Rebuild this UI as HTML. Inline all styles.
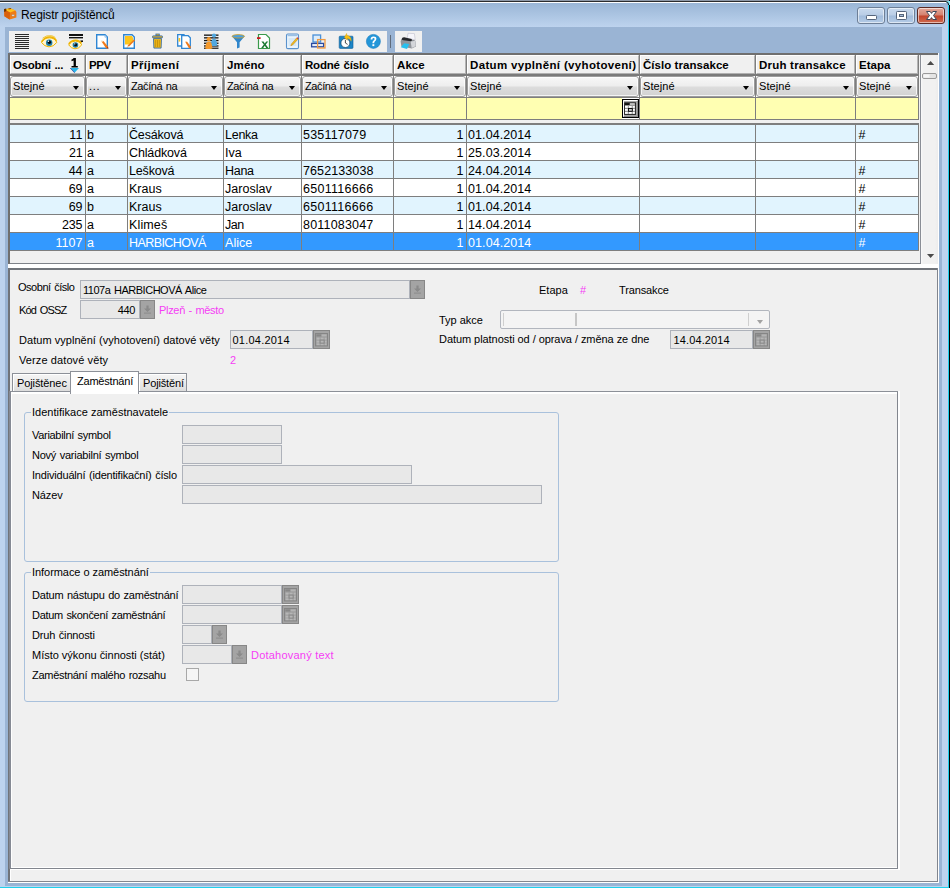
<!DOCTYPE html>
<html><head><meta charset="utf-8"><title>Registr pojištěnců</title>
<style>
*,*:before,*:after{box-sizing:border-box;margin:0;padding:0}
html,body{width:950px;height:888px;overflow:hidden}
body{position:relative;background:#20d0ec;font-family:"Liberation Sans",sans-serif;font-size:11px;color:#000}
.abs,.abs>*{position:absolute}
#win{position:absolute;left:0;top:0;width:948px;height:887px;background:linear-gradient(#9ab6d6 3px,#bdd3ee 27px,#bdd3ee 100%)}
#edgeR{position:absolute;left:949px;top:0;width:1px;height:888px;background:#000}
#top0{position:absolute;left:0;top:0;width:950px;height:1px;background:#8e99a8}
#top1{position:absolute;left:0;top:1px;width:948px;height:1px;background:#2c2c2c}
#top2{position:absolute;left:0;top:2px;width:948px;height:1px;background:#fdfeff}
#inner{position:absolute;left:5px;top:27px;width:937px;height:859px;background:#9ab4d4}
#title{position:absolute;left:21px;top:8px;font-size:12px;line-height:15px;white-space:nowrap}
/* caption buttons */
.cb{position:absolute;top:7px;height:17px;width:28px;border:1px solid #6d7f97;border-radius:3px;background:linear-gradient(#c9daee 0,#b9cde6 48%,#a2bcdc 52%,#b4cbe6 100%);box-shadow:inset 0 0 0 1px rgba(255,255,255,.55)}
.cb.x{background:linear-gradient(#e3a99b 0,#d4806e 48%,#c2432b 52%,#cf6a4f 100%);border-color:#5b2a25}
/* toolbar */
.tb{position:absolute;top:31px;height:21px;background:#f0f0f0}
/* grid */
#grid{position:absolute;left:8px;top:53px;width:931px;height:212px;background:#f0f0f0}
#grid:before{content:"";position:absolute;left:0;top:0;width:930px;height:211px;border:2px solid #6f6f6f;border-right:0;border-bottom:0}
#grid:after{content:"";position:absolute;left:2px;top:2px;width:911px;height:209px;border-right:1px solid #8a8e96;border-bottom:1px solid #7e8288}
#gbr{position:absolute;left:938px;top:53px;width:1px;height:212px;background:#fff}
#gbb{position:absolute;left:8px;top:264px;width:931px;height:1px;background:#fff}
.hc{position:absolute;top:55px;height:19px;background:#f0f0f0;border-top:1px solid #fff;border-left:1px solid #fff;border-right:1px solid #b4b4b4;border-bottom:1px solid #b0b0b0;font-weight:bold;font-size:11.5px;line-height:14px;white-space:nowrap;overflow:hidden}
.hc span{position:absolute;left:2px;top:2px}
.fc{position:absolute;top:76px;height:21px;background:#fff;font-size:11px;line-height:13px;white-space:nowrap;overflow:hidden}
.fc:before{content:"";position:absolute;left:0;top:0;right:0;bottom:0;border:1px solid #9c9c9c;border-radius:3px;background:linear-gradient(#f7f7f7 0,#eeeeee 45%,#dcdcdc 55%,#d2d2d2 100%);box-shadow:inset 0 0 0 1px rgba(255,255,255,.75)}
.fc span{position:absolute;left:3px;top:4px}
.fc i{position:absolute;right:6px;top:10px;width:0;height:0;border-left:3.5px solid transparent;border-right:3.5px solid transparent;border-top:4px solid #000}
.yc{position:absolute;top:98px;height:21px;background:#ffffb2}
.vl{position:absolute;width:1px;background:#7e7e7e}
.hl{position:absolute;height:1px;background:#7e7e7e}
.row{position:absolute;left:10px;width:909px;height:18px;border-bottom:1px solid #7e7e7e}
.row.odd{background:#e1f4fe}
.row.even{background:#fff}
.row.sel{background:#3399ff;color:#fff}
.c{position:absolute;top:0;height:17px;font-size:12.5px;line-height:17px;white-space:nowrap;overflow:hidden}
.c span{position:absolute;left:1px;top:2px}
.c.r span{left:auto;right:2.5px}
/* form */
.lbl{position:absolute;font-size:11px;line-height:13px;white-space:nowrap}
.mg{color:#f53df5}
.fld{position:absolute;height:19px;background:#e8e8e8;border:1px solid #aeb2ba;font-size:11px;line-height:17px;white-space:nowrap;overflow:hidden}
.btn{position:absolute;width:15px;height:19px;background:#a4a4a4;border:1px solid #878787}
.btn.cal{width:17px}
.btn svg{position:absolute;left:0;top:0}
.grp{position:absolute;border:1px solid #a9c1dc;border-radius:3px}
.grp b{position:absolute;top:-7px;left:6px;background:#f0f0f0;font-weight:normal;font-size:11px;line-height:13px;padding:0 1px;white-space:nowrap}
.tab{position:absolute;background:linear-gradient(#f5f5f5 0,#ececec 45%,#dcdcdc 100%);border:1px solid #8c9098;border-bottom:0;box-shadow:inset 1px 1px 0 #fff;font-size:11px;line-height:13px;white-space:nowrap}
.tab span{position:absolute;left:4px;top:3px}
.tab.on{background:#fff;box-shadow:none}
.tab.on span{left:6px;top:3px}
</style></head><body>
<div id="win"></div>
<div id="top0"></div><div id="top1"></div><div id="top2"></div><div id="edgeR"></div>
<svg style="position:absolute;left:944px;top:0" width="6" height="6" viewBox="944 0 6 6"><path d="M946 1 H950 V5 H948.6 Q948.6 2.4 946 2.4Z" fill="#7fe8f8"/><path d="M945.6 1.5 Q948.6 1.6 948.6 5" fill="none" stroke="#111" stroke-width="1"/></svg>
<div id="inner"></div>
<div id="title"><span style="letter-spacing:-0.099px">Registr pojištěnců</span></div>
<svg style="position:absolute;left:3px;top:7px" width="15" height="14" viewBox="3 7 15 14">
<path d="M4.2 9.6 L10 8.2 L15.4 10.6 L16.4 12 V17.6 L9.6 19.6 L4.4 16.2Z" fill="#ef7c14"/>
<path d="M4.2 9.6 L10 8.2 L15.4 10.6 L10 12.4Z" fill="#ffc21c"/>
<path d="M4.2 9.6 L10 12.4 L9.6 19.6 L4.4 16.2Z" fill="#d8600c"/>
<path d="M4 9 L6.2 8.6 L6.4 11 L4.2 12Z" fill="#6a3200"/>
<path d="M8.4 8.4 L11 8 L11.2 9 L8.6 9.4Z" fill="#8a4a00"/>
<rect x="11.6" y="14.6" width="3" height="1.6" rx=".6" fill="#f4efe8" stroke="#8a5a30" stroke-width=".4"/>
</svg>

<div class="cb" style="left:857px"></div><div class="cb" style="left:887px"></div><div class="cb x" style="left:917px"></div>
<svg style="position:absolute;left:857px;top:7px" width="88" height="17" viewBox="857 7 88 17">
<rect x="866.5" y="15.5" width="10" height="4" rx=".8" fill="#fff" stroke="#55657c" stroke-width="1"/>
<rect x="896.5" y="11.5" width="10" height="8" rx=".8" fill="#fff" stroke="#55657c" stroke-width="1"/>
<rect x="899.5" y="14.5" width="4" height="2" fill="#a8bed8" stroke="#55657c" stroke-width="1"/>
<path d="M926.5 11.5 H930.2 L931.5 13.4 L932.8 11.5 H936.5 L933.5 15.5 L936.5 19.5 H932.8 L931.5 17.6 L930.2 19.5 H926.5 L929.5 15.5Z" fill="#fff" stroke="#3c4658" stroke-width="1" stroke-linejoin="round"/>
</svg>

<div class="tb" style="left:9px;width:378px"></div>
<div class="tb" style="left:395px;width:27px"></div>
<div style="position:absolute;left:390px;top:35px;width:1px;height:13px;background:#5f6b7b"></div>
<svg style="position:absolute;left:9px;top:31px" width="414" height="21" viewBox="9 31 414 21">
<!-- 1 lines -->
<g fill="#2a2a2a"><rect x="15" y="34" width="14" height="1"/><rect x="15" y="36" width="14" height="1"/><rect x="15" y="38" width="14" height="1"/><rect x="15" y="40" width="14" height="1"/><rect x="15" y="42" width="14" height="1"/><rect x="15" y="44" width="14" height="1"/><rect x="15" y="46" width="14" height="1"/><rect x="15" y="48" width="14" height="1"/></g>
<!-- 2 eye -->
<g>
<path d="M41.5 42.5 Q44 37.8 49.5 37.8 Q55 38 56.8 42.4 Q53.5 46.9 49 46.9 Q44.5 46.6 41.5 42.5Z" fill="#fff4d0" stroke="#eeb400" stroke-width="1"/>
<path d="M41.6 41.8 Q45 36.8 50 37 Q54.6 37.2 56.4 40.8" stroke="#f0b400" stroke-width="1.7" fill="none"/>
<path d="M42.6 38.2 Q46.5 34.9 51.5 35.7 Q54 36.3 55.4 37.7" stroke="#f0c020" stroke-width=".9" fill="none"/>
<circle cx="49.2" cy="42.7" r="3.2" fill="#1e7ea8"/><circle cx="49.4" cy="42.3" r="1.7" fill="#05080c"/><circle cx="48.5" cy="41.3" r=".7" fill="#fff"/>
</g>
<!-- 3 eye + lines -->
<rect x="69" y="34" width="14" height="2" fill="#111"/><rect x="69" y="37" width="14" height="1.4" fill="#111"/><rect x="80.4" y="40.4" width="2.6" height="1.6" fill="#111"/>
<g>
<path d="M68.6 44.8 Q71 41 75.5 41 Q80 41.2 81.8 44.8 Q79 48.8 75 48.8 Q71.2 48.6 68.6 44.8Z" fill="#fff4d0" stroke="#eeb400" stroke-width="1"/>
<path d="M68.8 44 Q71.5 40 75.8 40.2 Q79.6 40.4 81.4 43.4" stroke="#f0b400" stroke-width="1.6" fill="none"/>
<circle cx="75.4" cy="45" r="2.8" fill="#1e7ea8"/><circle cx="75.6" cy="44.7" r="1.5" fill="#05080c"/><circle cx="74.8" cy="43.9" r=".6" fill="#fff"/>
</g>
<!-- 4 new doc -->
<path d="M96.7 34.7 H105 L107.3 37 V48.3 H96.7Z" fill="#fff" stroke="#2f86d4" stroke-width="1.4"/>
<path d="M104.9 35 V37.2 H107" fill="#cfe4f8" stroke="#7ab4e8" stroke-width=".6"/>
<path d="M101.7 41.7 L103.4 41 L108 46.6 L107.9 48.7 L106 48.3Z" fill="#f07a1c"/><path d="M101.1 40.5 L103.4 41 L101.7 42.3Z" fill="#f6d4a8"/><path d="M106.7 47.5 L108 46.6 L108.5 49Z" fill="#a83410"/>
<!-- 5 edit doc -->
<path d="M123.7 34.7 H132 L134.3 37 V48.3 H123.7Z" fill="#fff" stroke="#2f86d4" stroke-width="1.4"/>
<path d="M125 36 H131.8 L133 37.4 V41.5 L130 44.4 H125Z" fill="#fcc41c"/>
<path d="M133.9 39.4 L135 40.6 L128.8 46.8 L127.6 45.6Z" fill="#f07a1c"/><path d="M127.6 45.6 L128.8 46.8 L126.6 47.8Z" fill="#f6d4a8"/><path d="M126.6 47.8 L127.2 46.9 L127.6 47.4Z" fill="#603010"/>
<!-- 6 trash -->
<rect x="155.9" y="34" width="3.4" height="1.8" fill="#e8b020" stroke="#3a6ea8" stroke-width=".8"/>
<rect x="152.5" y="35.9" width="10" height="2" rx=".6" fill="#e8b020" stroke="#3a6ea8" stroke-width=".9"/>
<path d="M153.5 38.6 H161.5 L161.1 48.1 H153.9Z" fill="#f2ba18" stroke="#3a6ea8" stroke-width=".9"/>
<path d="M155.7 40 V47 M157.5 40 V47 M159.3 40 V47" stroke="#c4900c" stroke-width=".9" fill="none"/>
<!-- 7 copy doc -->
<path d="M177.7 34.7 H184 V46 H177.7Z" fill="#fff" stroke="#2f86d4" stroke-width="1.3"/>
<rect x="178.6" y="38" width="1.6" height="3.6" fill="#fcc41c"/>
<path d="M181.7 35.7 H188.2 L190.3 37.8 V48.3 H181.7Z" fill="#fff" stroke="#2f86d4" stroke-width="1.3"/>
<path d="M185.4 42.2 L186.9 41.6 L190.8 46.4 L190.8 48.6 L189 48.2Z" fill="#f07a1c"/><path d="M184.9 41.2 L186.9 41.6 L185.4 42.7Z" fill="#f6d4a8"/>
<!-- 8 people -->
<g fill="#111"><rect x="204" y="34.5" width="14.5" height="1.3"/><rect x="204" y="37.2" width="14.5" height="1.3"/><rect x="204" y="39.9" width="14.5" height="1.3"/><rect x="204" y="42.6" width="14.5" height="1.3"/><rect x="204" y="45.3" width="14.5" height="1.3"/><rect x="204" y="47.6" width="14.5" height="1.2"/></g>
<circle cx="214" cy="35.6" r="2.1" fill="#52a8e0"/><path d="M211 45.6 Q211 38.6 214 38.4 Q217 38.6 217.2 45.6 Q214 46.6 211 45.6Z" fill="#52a8e0"/>
<circle cx="208.8" cy="39.2" r="2.1" fill="#f59a2c"/><path d="M205.2 48.4 Q205.6 41.8 208.8 41.6 Q212 41.8 212.4 48.4 Q208.8 49.4 205.2 48.4Z" fill="#f59a2c"/>
<!-- 9 funnel -->
<path d="M232 36.2 Q238.2 33.2 244.6 36.2 L239.6 42.2 V47.6 L237 48.6 V42.2Z" fill="#2f86cc"/>
<ellipse cx="238.3" cy="36.3" rx="6.2" ry="1.7" fill="#4aa0e0" stroke="#d8a020" stroke-width=".8"/>
<!-- 10 excel -->
<path d="M258.5 34.5 H266 L269.5 38 V48.5 H258.5Z" fill="#fff" stroke="#3a9a4a" stroke-width="1.2"/>
<rect x="257" y="37.2" width="3.6" height="1.8" fill="#c8181c"/>
<path d="M261.4 41.4 H263.6 L264.8 43.4 L266.2 41.4 H268.2 L265.8 44.6 L268.4 48 H266.2 L264.8 45.8 L263.2 48 H261.2 L263.8 44.6Z" fill="#1e7a34"/>
<!-- 11 notepad -->
<rect x="286.5" y="34" width="12" height="14.6" rx="1.4" fill="#eaf4fc" stroke="#5a92cc" stroke-width="1.1"/>
<rect x="287.6" y="34.4" width="9.8" height="1.8" fill="#9cc0e4"/>
<path d="M288.5 39 H296.5 M288.5 41 H296.5 M288.5 43 H296.5 M288.5 45 H296.5" stroke="#b8d8f0" stroke-width=".8"/>
<path d="M296.6 38 L298 39.2 L292.6 45 L290.8 45.8 L291.4 44Z" fill="#f0c020" stroke="#c07a10" stroke-width=".5"/><path d="M296.6 38 L297.4 37.2 L298.8 38.4 L298 39.2Z" fill="#d03030"/>
<!-- 12 windows -->
<rect x="313" y="35" width="7.6" height="7" fill="#dcecfa" stroke="#4a90d8" stroke-width="1.3"/>
<rect x="311.6" y="43.4" width="12" height="3.4" fill="#e8eef8" stroke="#2a4aa0" stroke-width="1.3"/>
<rect x="317.6" y="39.6" width="7.4" height="8.4" fill="none" stroke="#f09a40" stroke-width="1.3"/>
<!-- 13 clock -->
<rect x="339.2" y="36.2" width="13.8" height="12.2" rx=".8" fill="#1c86c8" stroke="#0e5a94" stroke-width=".6"/>
<circle cx="345.4" cy="43" r="4.5" fill="#fff" stroke="#0a3a60" stroke-width=".7"/>
<path d="M345.4 43 V39.8 M345.4 43 L347.6 44.4" stroke="#222" stroke-width=".8" fill="none"/>
<path d="M344.4 37.4 L346.6 33.4 L347 35.4 Q351.6 36 351.2 41.2 Q350.2 38.2 347.2 38.4 L347.4 40.2Z" fill="#f8c010" stroke="#d89a08" stroke-width=".4"/>
<!-- 14 help -->
<circle cx="373.4" cy="41.4" r="7" fill="#2496d8"/><circle cx="373.4" cy="41.4" r="7" fill="none" stroke="#1a7cc0" stroke-width=".6"/>
<path d="M370.6 39.4 Q370.6 36.4 373.5 36.4 Q376.4 36.4 376.4 38.8 Q376.4 40.4 374.8 41.4 Q374.2 41.9 374.2 43.2 H372.4 Q372.4 41.2 373.6 40.4 Q374.6 39.7 374.6 38.9 Q374.6 38 373.5 38 Q372.4 38 372.4 39.4Z" fill="#fff"/><rect x="372.4" y="44.2" width="1.9" height="1.9" fill="#fff"/>
<!-- 15 printer -->
<path d="M400.6 41.4 Q400.6 38.6 403 38.2 L412 39.4 Q416 40 416 42.4 V46.4 L411.8 48.4 L401.4 46.6Z" fill="#90949a"/>
<path d="M410.6 41.6 L415.7 40.7 V46.3 L411.7 48Z" fill="#d4d6da"/>
<path d="M407.2 38.2 L408 33.3 L414.4 33.6 L415.2 39.8 L411.6 39.2Z" fill="#f6f6fb" stroke="#b4b4c4" stroke-width=".5"/>
<path d="M401.8 38.7 Q402.4 37.1 405.2 37.4 L411.6 39 Q412.7 40.2 411 41.3 L403.4 40.3 Q401.4 39.9 401.8 38.7Z" fill="#25272b"/>
<path d="M404.2 43.3 L409.3 44.1 L407 48.9 L400.8 47.3Z" fill="#28c0ee"/>
</svg>

<div id="grid"></div><div id="gbr"></div><div id="gbb"></div>
<div class="hc" style="left:10px;width:75px"><span style="letter-spacing:-0.321px;word-spacing:0.821px">Osobní ...</span></div>
<div class="fc" style="left:10px;width:75px"><span style="letter-spacing:0.099px">Stejné</span><i></i></div>
<div class="yc" style="left:10px;width:75px"></div>
<div class="hc" style="left:86px;width:41px"><span style="letter-spacing:-0.405px">PPV</span></div>
<div class="fc" style="left:86px;width:41px"><span style="letter-spacing:0.709px">...</span><i></i></div>
<div class="yc" style="left:86px;width:41px"></div>
<div class="hc" style="left:128px;width:95px"><span style="letter-spacing:0.351px">Příjmení</span></div>
<div class="fc" style="left:128px;width:95px"><span style="letter-spacing:-0.390px;word-spacing:0.890px">Začíná na</span><i></i></div>
<div class="yc" style="left:128px;width:95px"></div>
<div class="hc" style="left:224px;width:77px"><span style="letter-spacing:0.144px">Jméno</span></div>
<div class="fc" style="left:224px;width:77px"><span style="letter-spacing:-0.390px;word-spacing:0.890px">Začíná na</span><i></i></div>
<div class="yc" style="left:224px;width:77px"></div>
<div class="hc" style="left:302px;width:91px"><span style="letter-spacing:-0.189px;word-spacing:0.689px">Rodné číslo</span></div>
<div class="fc" style="left:302px;width:91px"><span style="letter-spacing:-0.390px;word-spacing:0.890px">Začíná na</span><i></i></div>
<div class="yc" style="left:302px;width:91px"></div>
<div class="hc" style="left:394px;width:72px"><span style="letter-spacing:0.075px">Akce</span></div>
<div class="fc" style="left:394px;width:72px"><span style="letter-spacing:0.099px">Stejné</span><i></i></div>
<div class="yc" style="left:394px;width:72px"></div>
<div class="hc" style="left:467px;width:172px"><span style="letter-spacing:0.338px">Datum vyplnění (vyhotovení)</span></div>
<div class="fc" style="left:467px;width:172px"><span style="letter-spacing:0.099px">Stejné</span><i></i></div>
<div class="yc" style="left:467px;width:172px"></div>
<div class="hc" style="left:640px;width:115px"><span style="letter-spacing:0.052px">Číslo transakce</span></div>
<div class="fc" style="left:640px;width:115px"><span style="letter-spacing:0.099px">Stejné</span><i></i></div>
<div class="yc" style="left:640px;width:115px"></div>
<div class="hc" style="left:756px;width:99px"><span style="letter-spacing:0.219px">Druh transakce</span></div>
<div class="fc" style="left:756px;width:99px"><span style="letter-spacing:0.099px">Stejné</span><i></i></div>
<div class="yc" style="left:756px;width:99px"></div>
<div class="hc" style="left:856px;width:62px"><span style="letter-spacing:0.034px">Etapa</span></div>
<div class="fc" style="left:856px;width:62px"><span style="letter-spacing:0.099px">Stejné</span><i></i></div>
<div class="yc" style="left:856px;width:62px"></div>
<div class="hl" style="left:10px;top:74px;width:909px;height:2px;background:#7a7a7a"></div>
<div class="hl" style="left:10px;top:97px;width:909px"></div>
<div class="hl" style="left:10px;top:119px;width:909px"></div>
<div class="hl" style="left:10px;top:123px;width:909px;height:2px"></div>
<div class="row odd" style="top:125px">
<div class="c r" style="left:0px;width:75px"><span style="letter-spacing:0.108px">11</span></div>
<div class="c" style="left:76px;width:41px"><span>b</span></div>
<div class="c" style="left:118px;width:95px"><span style="letter-spacing:-0.162px">Česáková</span></div>
<div class="c" style="left:214px;width:77px"><span style="letter-spacing:-0.253px">Lenka</span></div>
<div class="c" style="left:292px;width:91px"><span style="letter-spacing:0.195px">535117079</span></div>
<div class="c r" style="left:384px;width:72px"><span>1</span></div>
<div class="c" style="left:457px;width:172px"><span style="letter-spacing:0.084px">01.04.2014</span></div>
<div class="c" style="left:846px;width:62px"><span style="left:2.5px;letter-spacing:0.5px">#</span></div>
</div>
<div class="row even" style="top:143px">
<div class="c r" style="left:0px;width:75px"><span style="letter-spacing:-0.153px">21</span></div>
<div class="c" style="left:76px;width:41px"><span>a</span></div>
<div class="c" style="left:118px;width:95px"><span style="letter-spacing:-0.142px">Chládková</span></div>
<div class="c" style="left:214px;width:77px"><span style="letter-spacing:0.038px">Iva</span></div>
<div class="c r" style="left:384px;width:72px"><span>1</span></div>
<div class="c" style="left:457px;width:172px"><span style="letter-spacing:0.084px">25.03.2014</span></div>
</div>
<div class="row odd" style="top:161px">
<div class="c r" style="left:0px;width:75px"><span style="letter-spacing:-0.053px">44</span></div>
<div class="c" style="left:76px;width:41px"><span>a</span></div>
<div class="c" style="left:118px;width:95px"><span style="letter-spacing:-0.166px">Lešková</span></div>
<div class="c" style="left:214px;width:77px"><span style="letter-spacing:-0.273px">Hana</span></div>
<div class="c" style="left:292px;width:91px"><span style="letter-spacing:0.097px">7652133038</span></div>
<div class="c r" style="left:384px;width:72px"><span>1</span></div>
<div class="c" style="left:457px;width:172px"><span style="letter-spacing:0.084px">24.04.2014</span></div>
<div class="c" style="left:846px;width:62px"><span style="left:2.5px;letter-spacing:0.5px">#</span></div>
</div>
<div class="row even" style="top:179px">
<div class="c r" style="left:0px;width:75px"><span style="letter-spacing:-0.053px">69</span></div>
<div class="c" style="left:76px;width:41px"><span>a</span></div>
<div class="c" style="left:118px;width:95px"><span style="letter-spacing:0.029px">Kraus</span></div>
<div class="c" style="left:214px;width:77px"><span style="letter-spacing:0.032px">Jaroslav</span></div>
<div class="c" style="left:292px;width:91px"><span style="letter-spacing:0.283px">6501116666</span></div>
<div class="c r" style="left:384px;width:72px"><span>1</span></div>
<div class="c" style="left:457px;width:172px"><span style="letter-spacing:0.084px">01.04.2014</span></div>
<div class="c" style="left:846px;width:62px"><span style="left:2.5px;letter-spacing:0.5px">#</span></div>
</div>
<div class="row odd" style="top:197px">
<div class="c r" style="left:0px;width:75px"><span style="letter-spacing:-0.053px">69</span></div>
<div class="c" style="left:76px;width:41px"><span>b</span></div>
<div class="c" style="left:118px;width:95px"><span style="letter-spacing:0.029px">Kraus</span></div>
<div class="c" style="left:214px;width:77px"><span style="letter-spacing:0.032px">Jaroslav</span></div>
<div class="c" style="left:292px;width:91px"><span style="letter-spacing:0.283px">6501116666</span></div>
<div class="c r" style="left:384px;width:72px"><span>1</span></div>
<div class="c" style="left:457px;width:172px"><span style="letter-spacing:0.084px">01.04.2014</span></div>
<div class="c" style="left:846px;width:62px"><span style="left:2.5px;letter-spacing:0.5px">#</span></div>
</div>
<div class="row even" style="top:215px">
<div class="c r" style="left:0px;width:75px"><span style="letter-spacing:-0.086px">235</span></div>
<div class="c" style="left:76px;width:41px"><span>a</span></div>
<div class="c" style="left:118px;width:95px"><span style="letter-spacing:0.131px">Klimeš</span></div>
<div class="c" style="left:214px;width:77px"><span style="letter-spacing:-0.452px">Jan</span></div>
<div class="c" style="left:292px;width:91px"><span style="letter-spacing:0.191px">8011083047</span></div>
<div class="c r" style="left:384px;width:72px"><span>1</span></div>
<div class="c" style="left:457px;width:172px"><span style="letter-spacing:0.084px">14.04.2014</span></div>
<div class="c" style="left:846px;width:62px"><span style="left:2.5px;letter-spacing:0.5px">#</span></div>
</div>
<div class="row sel" style="top:233px">
<div class="c r" style="left:0px;width:75px"><span style="letter-spacing:0.052px">1107</span></div>
<div class="c" style="left:76px;width:41px"><span>a</span></div>
<div class="c" style="left:118px;width:95px"><span style="letter-spacing:-0.586px">HARBICHOVÁ</span></div>
<div class="c" style="left:214px;width:77px"><span style="letter-spacing:0.041px">Alice</span></div>
<div class="c r" style="left:384px;width:72px"><span>1</span></div>
<div class="c" style="left:457px;width:172px"><span style="letter-spacing:0.084px">01.04.2014</span></div>
<div class="c" style="left:846px;width:62px"><span style="left:2.5px;letter-spacing:0.5px">#</span></div>
</div>
<div class="vl" style="left:85px;top:55px;height:65px"></div>
<div class="vl" style="left:85px;top:123px;height:128px"></div>
<div class="vl" style="left:127px;top:55px;height:65px"></div>
<div class="vl" style="left:127px;top:123px;height:128px"></div>
<div class="vl" style="left:223px;top:55px;height:65px"></div>
<div class="vl" style="left:223px;top:123px;height:128px"></div>
<div class="vl" style="left:301px;top:55px;height:65px"></div>
<div class="vl" style="left:301px;top:123px;height:128px"></div>
<div class="vl" style="left:393px;top:55px;height:65px"></div>
<div class="vl" style="left:393px;top:123px;height:128px"></div>
<div class="vl" style="left:466px;top:55px;height:65px"></div>
<div class="vl" style="left:466px;top:123px;height:128px"></div>
<div class="vl" style="left:639px;top:55px;height:65px"></div>
<div class="vl" style="left:639px;top:123px;height:128px"></div>
<div class="vl" style="left:755px;top:55px;height:65px"></div>
<div class="vl" style="left:755px;top:123px;height:128px"></div>
<div class="vl" style="left:855px;top:55px;height:65px"></div>
<div class="vl" style="left:855px;top:123px;height:128px"></div>
<div class="vl" style="left:918px;top:55px;height:65px"></div>
<div class="vl" style="left:918px;top:123px;height:128px"></div>
<svg style="position:absolute;left:69px;top:57px" width="12" height="17" viewBox="69 57 12 17">
<path d="M73.6 58 H75.9 V66 H77.8 V67.6 H71.5 V66 H73.6 V60.6 L71.5 61.3 V59.6 Q73 59.2 73.6 58Z" fill="#000"/>
<path d="M70.2 68 H79 L74.6 72.8Z" fill="#28b4ea"/><path d="M70.2 68 L74.6 72.8" stroke="#2a3a98" stroke-width=".7" fill="none"/>
</svg>
<svg style="position:absolute;left:622px;top:98px" width="17" height="21" viewBox="0 0 17 21">
<rect x="0" y="0" width="17" height="21" fill="#fff"/>
<rect x="0.5" y="1.5" width="16" height="18" fill="#a9a9a9" stroke="#000" stroke-width="1"/>
<path d="M1.5 18.5 V2.5 H15.5" fill="none" stroke="#fff" stroke-width="1"/>
<path d="M2 18.5 H15.5 V3" fill="none" stroke="#8a8a8a" stroke-width="1"/>
<rect x="2.6" y="4.8" width="11" height="11.6" fill="#9a9a9a" stroke="#1a1a1a" stroke-width=".9"/>
<rect x="3" y="5.2" width="4.6" height="1.7" fill="#000"/><rect x="8" y="5.2" width="4.6" height="1.7" fill="#c4c4c4"/>
<g fill="#fff"><rect x="3" y="8" width="2.8" height="1.8"/><rect x="6.9" y="8" width="2.8" height="1.8"/><rect x="10.8" y="8" width="2" height="1.8"/>
<rect x="3" y="11" width="2.8" height="1.8"/><rect x="10.8" y="11" width="2" height="1.8"/>
<rect x="3" y="14" width="2.8" height="1.8"/><rect x="6.9" y="14" width="2.8" height="1.8"/><rect x="10.8" y="14" width="2" height="1.8"/></g>
<rect x="6.5" y="10.5" width="3.8" height="2.8" fill="#c8c8c8" stroke="#000" stroke-width=".9"/>
</svg>
<!-- scrollbar -->
<div style="position:absolute;left:921px;top:55px;width:17px;height:209px;background:linear-gradient(90deg,#fafafa 0,#f1f1f1 2px,#f1f1f1 14px,#ececec 17px)"></div>
<svg style="position:absolute;left:921px;top:55px" width="16" height="208" viewBox="921 55 16 208">
<path d="M927 65 L930.6 61 L934.2 65Z" fill="#4a4a4a"/>
<rect x="922.5" y="73.5" width="14" height="5" rx="1.5" fill="#e4e4e4" stroke="#9a9a9a" stroke-width="1"/>
<rect x="923.5" y="74.5" width="6" height="3" fill="#f6f6f6"/>
<path d="M927 254 L930.6 258 L934.2 254Z" fill="#4a4a4a"/>
</svg>

<div style="position:absolute;left:8px;top:264px;width:931px;height:4px;background:#fff"></div>
<div id="panel" style="position:absolute;left:8px;top:268px;width:931px;height:615px;background:#f0f0f0;border:2px solid #70747a;border-right:0;border-bottom:0"></div>
<div style="position:absolute;left:937px;top:268px;width:1px;height:614px;background:#82868e"></div>
<div style="position:absolute;left:938px;top:268px;width:1px;height:615px;background:#fff"></div>
<div style="position:absolute;left:8px;top:881px;width:930px;height:1px;background:#82868e"></div>
<div style="position:absolute;left:8px;top:882px;width:931px;height:1px;background:#fff"></div>

<div class="lbl" id="l1" style="letter-spacing:-0.476px;word-spacing:0.976px;left:18px;top:281px">Osobní číslo</div>
<div class="fld" style="left:80px;top:280px;width:330px"><span style="letter-spacing:-0.478px;word-spacing:0.978px;position:absolute;left:2px;top:1px">1107a HARBICHOVÁ Alice</span></div>
<div class="btn" style="left:410px;top:280px"><svg width="13" height="17" viewBox="0 0 13 17"><path d="M5.4 4.4 H7.6 V7.4 H10 L6.5 10.9 L3 7.4 H5.4Z" fill="#8a8a8a"/><rect x="3" y="11.6" width="7" height="1" fill="#8c8c8c"/></svg></div>
<div class="lbl" id="l2" style="letter-spacing:-0.825px;word-spacing:1.325px;left:19px;top:304px">Kód OSSZ</div>
<div class="fld" style="left:80px;top:300px;width:60px"><span style="letter-spacing:-0.353px;position:absolute;right:4px;top:1px">440</span></div>
<div class="btn" style="left:140px;top:300px"><svg width="13" height="17" viewBox="0 0 13 17"><path d="M5.4 4.4 H7.6 V7.4 H10 L6.5 10.9 L3 7.4 H5.4Z" fill="#8a8a8a"/><rect x="3" y="11.6" width="7" height="1" fill="#8c8c8c"/></svg></div>
<div class="lbl mg" style="letter-spacing:-0.314px;word-spacing:0.814px;left:159px;top:304px">Plzeň - město</div>
<div class="lbl" style="letter-spacing:0.038px;left:19px;top:334px">Datum vyplnění (vyhotovení) datové věty</div>
<div class="fld" style="left:230px;top:330px;width:83px"><span style="letter-spacing:0.224px;position:absolute;left:1.5px;top:1px">01.04.2014</span></div>
<div class="btn cal" style="left:313px;top:330px"><svg width="15" height="17" viewBox="0 0 15 17"><rect x="1.5" y="2.5" width="12" height="12.4" fill="#9c9c9c" stroke="#858585" stroke-width="1"/><rect x="2.4" y="3.4" width="5" height="2" fill="#878787"/><rect x="7.6" y="3.4" width="5" height="2" fill="#b4b4b4"/><g fill="#b6b6b6"><rect x="2.6" y="6.6" width="3" height="2"/><rect x="6.6" y="6.6" width="3" height="2"/><rect x="10.6" y="6.6" width="2" height="2"/><rect x="2.6" y="9.6" width="3" height="2"/><rect x="6.6" y="9.6" width="3" height="2"/><rect x="10.6" y="9.6" width="2" height="2"/><rect x="2.6" y="12.4" width="3" height="1.8"/><rect x="6.6" y="12.4" width="3" height="1.8"/><rect x="10.6" y="12.4" width="2" height="1.8"/></g><rect x="6" y="9" width="4.2" height="3.2" fill="none" stroke="#858585" stroke-width=".8"/></svg></div>
<div class="lbl" style="letter-spacing:0.103px;left:19px;top:354px">Verze datové věty</div>
<div class="lbl mg" style="letter-spacing:0.275px;left:230px;top:354px">2</div>

<div class="lbl" style="letter-spacing:0.010px;left:539px;top:284px">Etapa</div>
<div class="lbl mg" style="letter-spacing:2.175px;left:580px;top:284px">#</div>
<div class="lbl" style="letter-spacing:-0.128px;left:619px;top:284px">Transakce</div>
<div class="lbl" style="letter-spacing:-0.029px;left:439px;top:314px">Typ akce</div>
<div class="fld" style="left:500px;top:310px;width:270px;border-color:#b2b6be;background:#f4f4f4;border-radius:2px"></div>
<div style="position:absolute;left:503px;top:313px;width:1px;height:13px;background:#cfcfcf"></div>
<div style="position:absolute;left:575px;top:313px;width:2px;height:13px;background:#c6c6c6"></div>
<div style="position:absolute;left:748px;top:313px;width:1px;height:13px;background:#cfcfcf"></div>
<div style="position:absolute;left:757px;top:320px;width:0;height:0;border-left:3.5px solid transparent;border-right:3.5px solid transparent;border-top:4px solid #a2a2a2"></div>
<div class="lbl" style="letter-spacing:-0.059px;left:439px;top:333px">Datum platnosti od / oprava / změna ze dne</div>
<div class="fld" style="left:670px;top:330px;width:83px"><span style="letter-spacing:0.124px;position:absolute;left:2.5px;top:1px">14.04.2014</span></div>
<div class="btn cal" style="left:753px;top:330px"><svg width="15" height="17" viewBox="0 0 15 17"><rect x="1.5" y="2.5" width="12" height="12.4" fill="#9c9c9c" stroke="#858585" stroke-width="1"/><rect x="2.4" y="3.4" width="5" height="2" fill="#878787"/><rect x="7.6" y="3.4" width="5" height="2" fill="#b4b4b4"/><g fill="#b6b6b6"><rect x="2.6" y="6.6" width="3" height="2"/><rect x="6.6" y="6.6" width="3" height="2"/><rect x="10.6" y="6.6" width="2" height="2"/><rect x="2.6" y="9.6" width="3" height="2"/><rect x="6.6" y="9.6" width="3" height="2"/><rect x="10.6" y="9.6" width="2" height="2"/><rect x="2.6" y="12.4" width="3" height="1.8"/><rect x="6.6" y="12.4" width="3" height="1.8"/><rect x="10.6" y="12.4" width="2" height="1.8"/></g><rect x="6" y="9" width="4.2" height="3.2" fill="none" stroke="#858585" stroke-width=".8"/></svg></div>

<!-- tabs -->
<div style="position:absolute;left:10px;top:391px;width:889px;height:1px;background:#8c9098"></div>
<div style="position:absolute;left:11px;top:392px;width:886px;height:2px;background:#fff"></div>
<div style="position:absolute;left:9px;top:391px;width:2px;height:478px;background:#868a94"></div>
<div style="position:absolute;left:11px;top:392px;width:1px;height:476px;background:#fff"></div>
<div style="position:absolute;left:897px;top:392px;width:1px;height:477px;background:#82868e"></div>
<div style="position:absolute;left:898px;top:391px;width:2px;height:479px;background:#fff"></div>
<div style="position:absolute;left:11px;top:867px;width:886px;height:1px;background:#fff"></div>
<div style="position:absolute;left:9px;top:868px;width:889px;height:1px;background:#82868e"></div>
<div style="position:absolute;left:10px;top:869px;width:890px;height:1px;background:#fff"></div>
<div style="position:absolute;left:10px;top:870px;width:1px;height:11px;background:#fff"></div>

<div class="tab" style="left:12px;top:373px;width:59px;height:18px"><span style="letter-spacing:-0.097px">Pojištěnec</span></div>
<div class="tab" style="left:138px;top:373px;width:49px;height:18px"><span style="letter-spacing:-0.156px">Pojištění</span></div>
<div class="tab on" style="left:70px;top:371px;width:69px;height:23px"><span style="letter-spacing:-0.209px">Zaměstnání</span></div>

<div class="grp" style="left:24px;top:412px;width:535px;height:150px"><b style="letter-spacing:0.017px">Identifikace zaměstnavatele</b></div>
<div class="lbl" style="letter-spacing:-0.303px;word-spacing:0.803px;left:32px;top:429px">Variabilní symbol</div>
<div class="fld" style="left:182px;top:425px;width:100px"></div>
<div class="lbl" style="letter-spacing:-0.232px;word-spacing:0.732px;left:32px;top:449px">Nový variabilní symbol</div>
<div class="fld" style="left:182px;top:445px;width:100px"></div>
<div class="lbl" style="letter-spacing:-0.187px;word-spacing:0.687px;left:32px;top:469px">Individuální (identifikační) číslo</div>
<div class="fld" style="left:182px;top:465px;width:230px"></div>
<div class="lbl" style="letter-spacing:-0.117px;left:32px;top:489px">Název</div>
<div class="fld" style="left:182px;top:485px;width:360px"></div>

<div class="grp" style="left:24px;top:572px;width:535px;height:130px"><b style="letter-spacing:-0.055px">Informace o zaměstnání</b></div>
<div class="lbl" style="letter-spacing:-0.209px;word-spacing:0.709px;left:32px;top:589px">Datum nástupu do zaměstnání</div>
<div class="fld" style="left:182px;top:585px;width:100px"></div>
<div class="btn cal" style="left:282px;top:585px"><svg width="15" height="17" viewBox="0 0 15 17"><rect x="1.5" y="2.5" width="12" height="12.4" fill="#9c9c9c" stroke="#858585" stroke-width="1"/><rect x="2.4" y="3.4" width="5" height="2" fill="#878787"/><rect x="7.6" y="3.4" width="5" height="2" fill="#b4b4b4"/><g fill="#b6b6b6"><rect x="2.6" y="6.6" width="3" height="2"/><rect x="6.6" y="6.6" width="3" height="2"/><rect x="10.6" y="6.6" width="2" height="2"/><rect x="2.6" y="9.6" width="3" height="2"/><rect x="6.6" y="9.6" width="3" height="2"/><rect x="10.6" y="9.6" width="2" height="2"/><rect x="2.6" y="12.4" width="3" height="1.8"/><rect x="6.6" y="12.4" width="3" height="1.8"/><rect x="10.6" y="12.4" width="2" height="1.8"/></g><rect x="6" y="9" width="4.2" height="3.2" fill="none" stroke="#858585" stroke-width=".8"/></svg></div>
<div class="lbl" style="letter-spacing:-0.309px;word-spacing:0.809px;left:32px;top:609px">Datum skončení zaměstnání</div>
<div class="fld" style="left:182px;top:605px;width:100px"></div>
<div class="btn cal" style="left:282px;top:605px"><svg width="15" height="17" viewBox="0 0 15 17"><rect x="1.5" y="2.5" width="12" height="12.4" fill="#9c9c9c" stroke="#858585" stroke-width="1"/><rect x="2.4" y="3.4" width="5" height="2" fill="#878787"/><rect x="7.6" y="3.4" width="5" height="2" fill="#b4b4b4"/><g fill="#b6b6b6"><rect x="2.6" y="6.6" width="3" height="2"/><rect x="6.6" y="6.6" width="3" height="2"/><rect x="10.6" y="6.6" width="2" height="2"/><rect x="2.6" y="9.6" width="3" height="2"/><rect x="6.6" y="9.6" width="3" height="2"/><rect x="10.6" y="9.6" width="2" height="2"/><rect x="2.6" y="12.4" width="3" height="1.8"/><rect x="6.6" y="12.4" width="3" height="1.8"/><rect x="10.6" y="12.4" width="2" height="1.8"/></g><rect x="6" y="9" width="4.2" height="3.2" fill="none" stroke="#858585" stroke-width=".8"/></svg></div>
<div class="lbl" style="letter-spacing:-0.159px;word-spacing:0.659px;left:32px;top:629px">Druh činnosti</div>
<div class="fld" style="left:182px;top:625px;width:30px"></div>
<div class="btn" style="left:212px;top:625px"><svg width="13" height="17" viewBox="0 0 13 17"><path d="M5.4 4.4 H7.6 V7.4 H10 L6.5 10.9 L3 7.4 H5.4Z" fill="#8a8a8a"/><rect x="3" y="11.6" width="7" height="1" fill="#8c8c8c"/></svg></div>
<div class="lbl" style="letter-spacing:-0.017px;left:32px;top:649px">Místo výkonu činnosti (stát)</div>
<div class="fld" style="left:182px;top:645px;width:50px"></div>
<div class="btn" style="left:232px;top:645px"><svg width="13" height="17" viewBox="0 0 13 17"><path d="M5.4 4.4 H7.6 V7.4 H10 L6.5 10.9 L3 7.4 H5.4Z" fill="#8a8a8a"/><rect x="3" y="11.6" width="7" height="1" fill="#8c8c8c"/></svg></div>
<div class="lbl mg" style="letter-spacing:0.220px;left:251px;top:649px">Dotahovaný text</div>
<div class="lbl" style="letter-spacing:-0.288px;word-spacing:0.788px;left:32px;top:669px">Zaměstnání malého rozsahu</div>
<div style="position:absolute;left:186px;top:668px;width:13px;height:13px;background:#f5f5f5;border:1px solid #a8a8a8"></div>

</body></html>
